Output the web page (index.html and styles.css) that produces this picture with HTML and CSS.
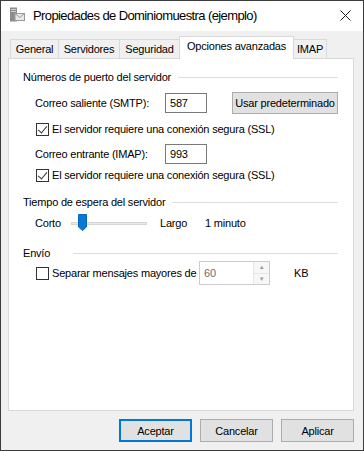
FILE: index.html
```html
<!DOCTYPE html>
<html lang="es">
<head>
    <meta charset="UTF-8">
    <title>Propiedades de Dominiomuestra (ejemplo)</title>
    <link rel="stylesheet" href="styles.css">
</head>
<body>
    <div class="window">
        <div class="titlebar">
            <svg class="app-icon" width="16" height="16" viewBox="0 0 16 16">
                <rect x="1" y="0.5" width="7" height="14" fill="#8c8c8c"/>
                <rect x="2" y="2" width="5" height="1" fill="#d0d0d0"/>
                <rect x="2" y="4" width="5" height="1" fill="#d0d0d0"/>
                <rect x="6" y="6.5" width="9.5" height="7" fill="#e8e8e8" stroke="#9a9a9a"/>
                <path d="M6 6.5 L10.75 10.5 L15.5 6.5" fill="none" stroke="#9a9a9a"/>
            </svg>
            <span class="title">Propiedades de Dominiomuestra (ejemplo)</span>
            <svg class="close" width="11" height="11" viewBox="0 0 11 11">
                <path d="M0.5 0.5 L10.5 10.5 M10.5 0.5 L0.5 10.5" stroke="#1a1a1a" stroke-width="1"/>
            </svg>
        </div>
        <div class="content">
            <div class="tabs">
                <div class="tab">General</div>
                <div class="tab">Servidores</div>
                <div class="tab">Seguridad</div>
                <div class="tab active">Opciones avanzadas</div>
                <div class="tab">IMAP</div>
            </div>
            <div class="panel">
                <div class="group-title"><span>Números de puerto del servidor</span><i></i></div>
                <div class="row row-smtp">
                    <span class="field-label">Correo saliente (SMTP):</span>
                    <div class="textbox">587</div>
                    <button class="btn btn-default">Usar predeterminado</button>
                </div>
                <label class="check row-check1"><span class="box checked"></span>El servidor requiere una conexión segura (SSL)</label>
                <div class="row row-imap">
                    <span class="field-label">Correo entrante (IMAP):</span>
                    <div class="textbox">993</div>
                </div>
                <label class="check row-check2"><span class="box checked"></span>El servidor requiere una conexión segura (SSL)</label>

                <div class="group-title gt-timeout"><span>Tiempo de espera del servidor</span><i></i></div>
                <div class="row row-slider">
                    <span class="slider-label">Corto</span>
                    <div class="slider">
                        <div class="track"></div>
                        <svg class="thumb" width="9" height="17" viewBox="0 0 9 17">
                            <path d="M0.5 0.5 H8.5 V13 L4.5 16.5 L0.5 13 Z" fill="#0a79d6" stroke="#0a66b8"/>
                        </svg>
                    </div>
                    <span class="slider-max">Largo</span>
                    <span>1 minuto</span>
                </div>

                <div class="group-title gt-send"><span>Envío</span><i></i></div>
                <div class="row row-send">
                    <label class="check"><span class="box"></span>Separar mensajes mayores de</label>
                    <div class="spin">
                        <span class="spin-value">60</span>
                        <div class="spin-btns">
                            <span>&#9650;</span>
                            <span>&#9660;</span>
                        </div>
                    </div>
                    <span class="unit">KB</span>
                </div>
            </div>
            <div class="buttons">
                <button class="btn focused">Aceptar</button>
                <button class="btn">Cancelar</button>
                <button class="btn">Aplicar</button>
            </div>
        </div>
    </div>
</body>
</html>
```

FILE: styles.css
```css
html, body {
    margin: 0;
    padding: 0;
}
body {
    font-family: 'Liberation Sans', Arial, sans-serif;
    font-size: 11px;
    letter-spacing: -0.2px;
    color: #000000;
    background-color: #ffffff;
    white-space: nowrap;
}
.window {
    width: 364px;
    height: 451px;
    box-sizing: border-box;
    border: 1px solid #3c3c3c;
    display: flex;
    flex-direction: column;
    background-color: #f0f0f0;
}
.titlebar {
    height: 30px;
    background-color: #ffffff;
    display: flex;
    align-items: center;
    padding: 0 0 0 8px;
}
.app-icon {
    margin-right: 8px;
    margin-top: -2px;
}
.title {
    font-size: 13px;
    letter-spacing: -0.6px;
    flex: 1;
    color: #000000;
    margin-top: -1px;
}
.close {
    margin-right: 12px;
    margin-top: -1px;
}
.content {
    flex: 1;
    display: flex;
    flex-direction: column;
    padding: 5px 9px 0 7px;
}
.tabs {
    display: flex;
    align-items: flex-end;
    height: 22px;
    padding-left: 2px;
    position: relative;
    z-index: 1;
}
.tab {
    height: 19px;
    line-height: 18px;
    box-sizing: border-box;
    text-align: center;
    border: 1px solid #d9d9d9;
    border-bottom: none;
    margin-right: -1px;
    background-color: #f0f0f0;
}
.tab:nth-child(1) { width: 49px; }
.tab:nth-child(2) { width: 62px; }
.tab:nth-child(3) { width: 61px; }
.tab:nth-child(5) { width: 34px; }
.tab.active {
    width: 115px;
    height: 23px;
    line-height: 19px;
    background-color: #ffffff;
    margin: 0 -1px -1px 0;
}
.panel {
    height: 353px;
    box-sizing: border-box;
    background-color: #ffffff;
    border: 1px solid #d9d9d9;
    padding: 10px 15px 0 14px;
    display: flex;
    flex-direction: column;
}
.group-title {
    height: 16px;
    display: flex;
    align-items: center;
}
.group-title i {
    flex: 1;
    height: 1px;
    background-color: #dcdcdc;
    margin-left: 7px;
}
.gt-timeout {
    margin-top: 11px;
}
.gt-send {
    margin-top: 13px;
}
.gt-send i {
    margin-left: 23px;
}
.row {
    display: flex;
    align-items: center;
    padding-left: 12px;
}
.row-smtp {
    margin-top: 7px;
    height: 22px;
}
.row-imap {
    margin-top: 7px;
    height: 20px;
}
.field-label {
    width: 130px;
}
.textbox {
    width: 42px;
    height: 20px;
    box-sizing: border-box;
    border: 1px solid #7a7a7a;
    padding: 0 4px;
    line-height: 18px;
}
.btn {
    font-family: inherit;
    font-size: 11px;
    letter-spacing: -0.2px;
    color: #000000;
    background-color: #e1e1e1;
    border: 1px solid #adadad;
    padding: 0;
    height: 23px;
    width: 73px;
    white-space: nowrap;
}
.btn-default {
    margin-left: 25px;
    width: 106px;
    height: 22px;
}
.btn.focused {
    border-color: #0078d7;
    box-shadow: inset 0 0 0 1px #0078d7;
}
.check {
    display: flex;
    align-items: center;
    height: 16px;
}
.row-check1 {
    margin-top: 7px;
    padding-left: 13px;
}
.row-check2 {
    margin-top: 3px;
    padding-left: 13px;
}
.box {
    width: 13px;
    height: 13px;
    box-sizing: border-box;
    border: 1px solid #333333;
    background-color: #ffffff;
    margin-right: 3px;
    position: relative;
}
.box.checked::after {
    content: "";
    position: absolute;
    left: 3px;
    top: 0px;
    width: 4px;
    height: 8px;
    border: solid #333333;
    border-width: 0 1px 1px 0;
    transform: rotate(40deg);
}
.row-slider {
    margin-top: 4px;
    height: 18px;
}
.slider-label {
    width: 36px;
}
.slider {
    width: 76px;
    height: 18px;
    position: relative;
    display: flex;
    align-items: center;
}
.track {
    width: 76px;
    height: 3px;
    background-color: #e7eaea;
    border: 1px solid #d6d6d6;
    box-sizing: border-box;
}
.thumb {
    position: absolute;
    left: 7px;
    top: 0;
}
.slider-max {
    margin-left: 13px;
    width: 45px;
}
.row-send {
    margin-top: 0;
    height: 24px;
    padding-left: 13px;
}
.row-send .check {
    width: 163px;
}
.spin {
    width: 71px;
    height: 24px;
    box-sizing: border-box;
    border: 1px solid #cccccc;
    display: flex;
    color: #6d6d6d;
}
.spin-value {
    flex: 1;
    line-height: 22px;
    padding-left: 4px;
}
.spin-btns {
    width: 15px;
    display: flex;
    flex-direction: column;
    border-left: 1px solid #e6e6e6;
    font-size: 6px;
    color: #9a9a9a;
}
.spin-btns span {
    flex: 1;
    display: flex;
    align-items: center;
    justify-content: center;
    background-color: #f7f7f7;
}
.spin-btns span + span {
    border-top: 1px solid #e6e6e6;
}
.unit {
    margin-left: 24px;
}
.buttons {
    display: flex;
    justify-content: flex-end;
    gap: 8px;
    margin-top: 8px;
}
```
